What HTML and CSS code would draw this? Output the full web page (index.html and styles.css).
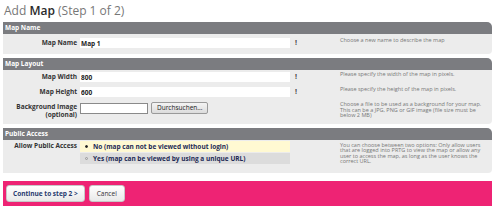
FILE: index.html
```html
<!DOCTYPE html>
<html>
<head>
<meta charset="utf-8">
<link rel="stylesheet" href="styles.css">
</head>
<body>
<h1 class="title">Add <b>Map</b> (Step 1 of 2)</h1>

<section class="group">
  <div class="group-head">Map Name</div>
  <div class="group-body first">
    <div class="row">
      <label class="lbl">Map Name</label>
      <div class="field"><input class="txt" value="Map 1"></div>
      <span class="req">!</span>
      <div class="help">Choose a new name to describe the map</div>
    </div>
  </div>
</section>

<section class="group">
  <div class="group-head">Map Layout</div>
  <div class="group-body">
    <div class="row">
      <label class="lbl">Map Width</label>
      <div class="field"><input class="txt" value="800"></div>
      <span class="req">!</span>
      <div class="help">Please specify the width of the map in pixels.</div>
    </div>
    <div class="row">
      <label class="lbl">Map Height</label>
      <div class="field"><input class="txt" value="600"></div>
      <span class="req">!</span>
      <div class="help">Please specify the height of the map in pixels.</div>
    </div>
    <div class="row">
      <label class="lbl">Background Image<br>(optional)</label>
      <div class="field file"><span class="filebox"></span><span class="browse">Durchsuchen...</span></div>
      <span class="req"></span>
      <div class="help">Choose a file to be used as a background for your map. This can be a JPG, PNG or GIF image (file size must be below 2 MB)</div>
    </div>
  </div>
</section>

<section class="group">
  <div class="group-head">Public Access</div>
  <div class="group-body public">
    <div class="row">
      <label class="lbl">Allow Public Access</label>
      <div class="field radios">
        <div class="opt sel"><span class="dot on"></span>No (map can not be viewed without login)</div>
        <div class="opt"><span class="dot"></span>Yes (map can be viewed by using a unique URL)</div>
      </div>
      <span class="req"></span>
      <div class="help">You can choose between two options: Only allow users that are logged into PRTG to view the map or allow any user to access the map, as long as the user knows the correct URL.</div>
    </div>
  </div>
</section>

<div class="actions">
  <button class="btn">Continue to step 2 &gt;</button>
  <button class="btn cancel">Cancel</button>
</div>
</body>
</html>
```
FILE: styles.css
```css
* { box-sizing: border-box; }
body {
  margin: 0;
  padding: 0 7px 0 3px;
  background: #fff;
  font-family: "Open Sans", "DejaVu Sans", sans-serif;
  font-size: 6px;
  color: #333;
}
.title {
  margin: 0;
  padding: 4px 0 0 1px;
  height: 22px;
  font-size: 12px;
  font-weight: normal;
  color: #777;
  line-height: 14px;
}
.title b { color: #2a2a2a; font-weight: 600; }

.group { margin-bottom: 4px; }
.group-head {
  height: 12px;
  background: #7b7c80;
  color: #fff;
  font-weight: bold;
  font-size: 6.5px;
  line-height: 12px;
  padding-left: 2px;
  border-radius: 0 5px 0 0;
}
.group-body {
  background: #ececec;
  padding: 2px 0 5px;
  border-radius: 0 0 4px 0;
  display: flex;
  flex-direction: column;
  gap: 5px;
}
.group-body.first { padding: 4px 0 6px; }
.group-body.public { padding: 1px 0 9px; }
.row {
  display: grid;
  grid-template-columns: 74px 210px 20px 1fr;
  column-gap: 3px;
  align-items: start;
}
.lbl {
  text-align: right;
  font-weight: bold;
  font-size: 6.5px;
  color: #333;
  line-height: 8px;
  padding-top: 1px;
}
.txt {
  width: 210px;
  height: 10px;
  border: 0;
  background: #fff;
  font: bold 6.5px "Open Sans", "DejaVu Sans", sans-serif;
  color: #222;
  padding: 0 0 0 1px;
  margin: 0;
  display: block;
}
.req {
  font-size: 7px;
  line-height: 8px;
  font-weight: bold;
  color: #444;
  padding: 1px 0 0 2px;
}
.help {
  color: #777;
  font-size: 5.5px;
  line-height: 5.7px;
  padding: 0 8px 0 24px;
}
.public .help { padding-top: 2px; line-height: 5.3px; }
.field.file { display: flex; gap: 3px; align-items: center; padding-top: 0; }
.filebox {
  width: 68px;
  height: 11px;
  background: #fff;
  border: 1px solid #8a8a8a;
}
.browse {
  height: 12px;
  padding: 0 5px;
  border: 1px solid #9a9a9a;
  border-radius: 2px;
  background: linear-gradient(#f4f4f4, #dcdcdc);
  font-size: 6.5px;
  line-height: 10px;
  color: #222;
}
.radios { display: flex; flex-direction: column; gap: 1px; }
.opt {
  height: 11px;
  line-height: 11px;
  font-weight: bold;
  font-size: 6.5px;
  color: #1d2a55;
  padding-left: 5px;
  background: #dcdcdc;
  display: flex;
  align-items: center;
}
.opt.sel { background: #fff9d2; }
.dot {
  width: 3px;
  height: 3px;
  border-radius: 50%;
  border: 1px solid #999;
  margin-right: 5px;
}
.dot.on { background: #222; border-color: #222; }

.actions {
  margin-top: 8px;
  background: #ee2374;
  height: 25px;
  display: flex;
  align-items: center;
  gap: 4px;
  padding-left: 3px;
}
.btn {
  height: 17px;
  border: 1px solid #c8c8c8;
  border-radius: 3px;
  background: linear-gradient(#ffffff, #e9e9e9);
  font: bold 6.5px "Open Sans", "DejaVu Sans", sans-serif;
  color: #26396e;
  padding: 0 6px;
}
.btn.cancel { font-weight: normal; color: #333; padding: 0 7px; }
```
